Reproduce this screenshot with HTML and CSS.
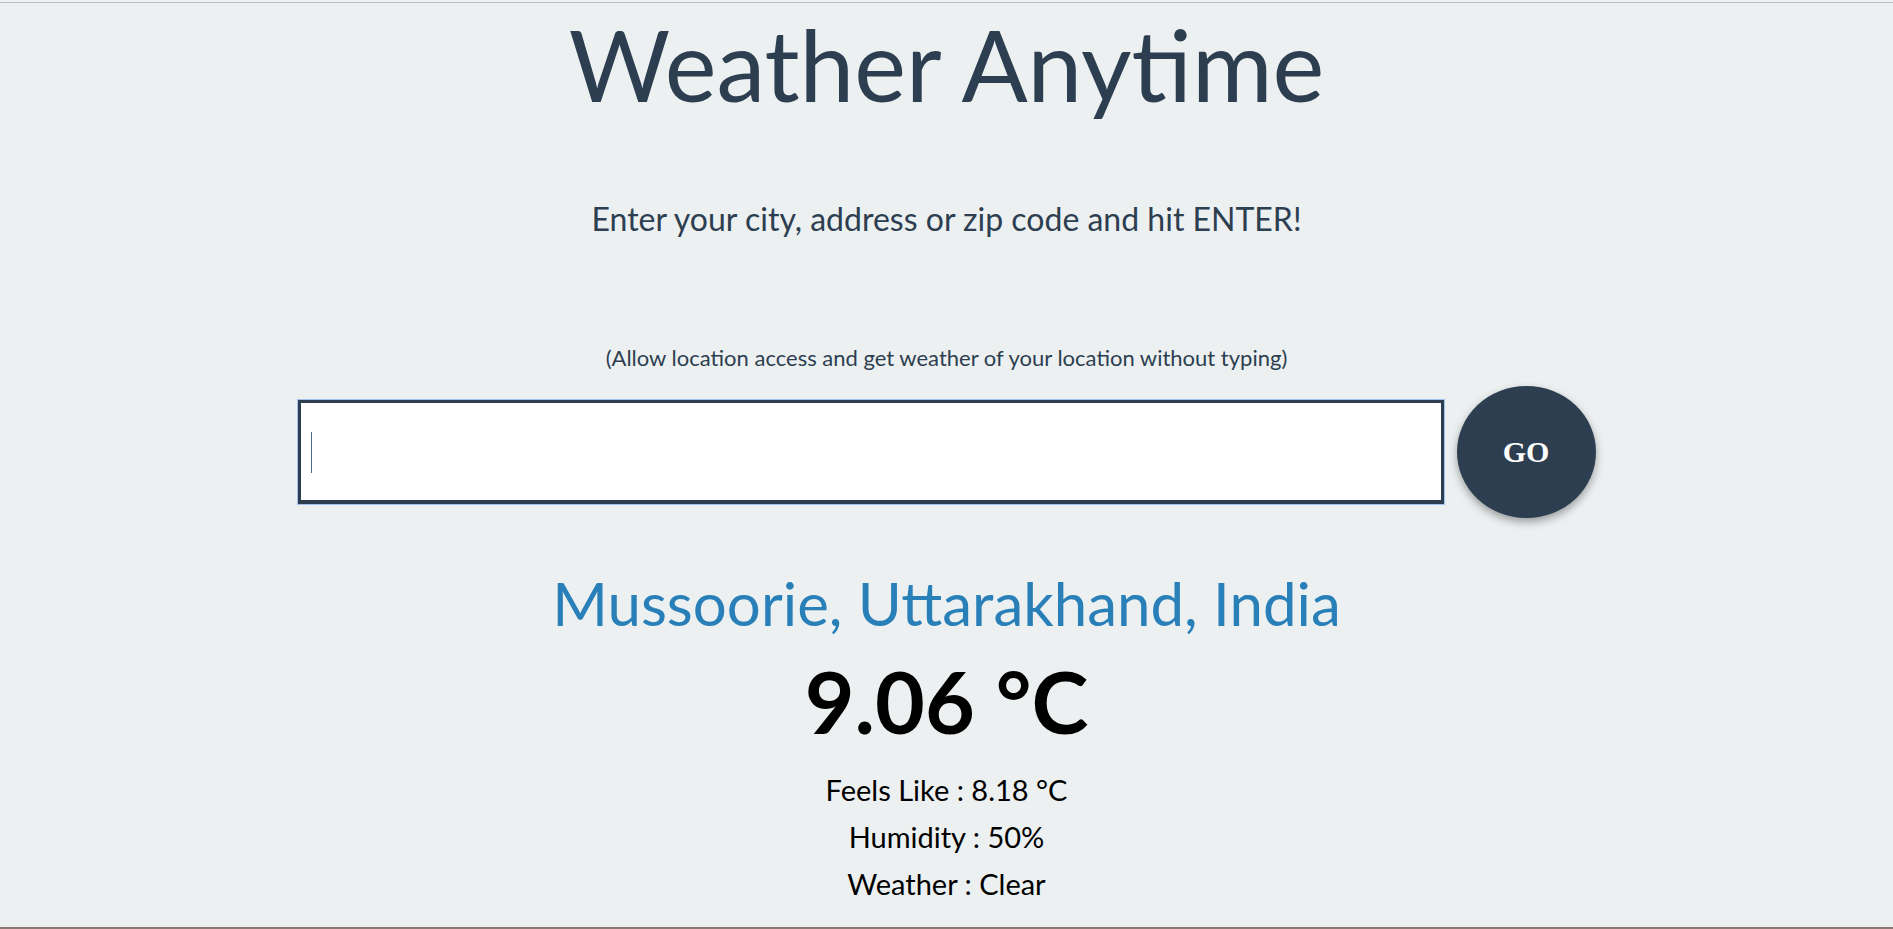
FILE: index.html
```html
<!DOCTYPE html>
<html lang="en">
<head>
<meta charset="utf-8">
<title>Weather Anytime</title>
<link rel="stylesheet" href="styles.css">
</head>
<body>
<div class="page">
  <div class="topline"></div>
  <h1 class="title">Weather Anytime</h1>
  <p class="subtitle">Enter your city, address or zip code and hit ENTER!</p>
  <p class="hint">(Allow location access and get weather of your location without typing)</p>
  <div class="search">
    <div class="field">
      <input class="input" type="text" aria-label="Location">
      <span class="caret"></span>
    </div>
    <button class="go" type="button">GO</button>
  </div>
  <h2 class="city">Mussoorie, Uttarakhand, India</h2>
  <p class="temp">9.06 °C</p>
  <p class="detail">Feels Like : 8.18 °C</p>
  <p class="detail">Humidity : 50%</p>
  <p class="detail">Weather : Clear</p>
</div>
</body>
</html>
```
FILE: styles.css
```css
html, body {
  margin: 0;
  padding: 0;
}
body {
  background: #ecf0f1;
  font-family: Lato, "Open Sans", sans-serif;
  color: #2c3e50;
}
.page {
  box-sizing: border-box;
  min-height: 100vh;
  padding-top: 2px;
  text-align: center;
  border-bottom: 2px solid #8a7872;
}
.topline {
  height: 1px;
  background: #b9bdbf;
}
.title {
  margin: 3px 0 0;
  font-size: 98px;
  line-height: 1.2;
  font-weight: 400;
  color: #2c3e50;
}
.subtitle {
  margin: 76px 0 0;
  font-size: 32px;
  line-height: 1.2;
}
.hint {
  margin: 107px 0 0;
  font-size: 22px;
  line-height: 1.2;
}
.search {
  margin-top: 15px;
  display: flex;
  justify-content: center;
  align-items: center;
  gap: 13px;
  height: 132px;
}
.field {
  position: relative;
  width: 1146px;
  height: 104px;
}
.input {
  box-sizing: border-box;
  width: 100%;
  height: 100%;
  border: 3px solid #2c3e50;
  border-bottom-width: 4px;
  box-shadow: 0 0 0 1px #a3c2ee;
  background: #fff;
  outline: none;
  padding: 0 10px;
  font-size: 24px;
}
.caret {
  position: absolute;
  left: 13px;
  top: 32px;
  width: 1px;
  height: 41px;
  background: #4a6a8a;
}
.go {
  width: 139px;
  height: 132px;
  border: none;
  border-radius: 50%;
  background: #2c3e50;
  color: #fff;
  font-family: "Liberation Serif", serif;
  font-weight: 700;
  font-size: 30px;
  box-shadow: 0 4px 8px rgba(0, 0, 0, 0.35);
  padding: 0;
}
.city {
  margin: 49px 0 0;
  font-size: 60px;
  line-height: 1.2;
  font-weight: 400;
  color: #2980b9;
}
.temp {
  margin: 10px 0 0;
  font-size: 86px;
  line-height: 1.2;
  font-weight: 700;
  color: #000;
}
.detail {
  margin: 0;
  font-size: 29px;
  line-height: 47px;
  color: #000;
}
.temp + .detail {
  margin-top: 13px;
}
```
